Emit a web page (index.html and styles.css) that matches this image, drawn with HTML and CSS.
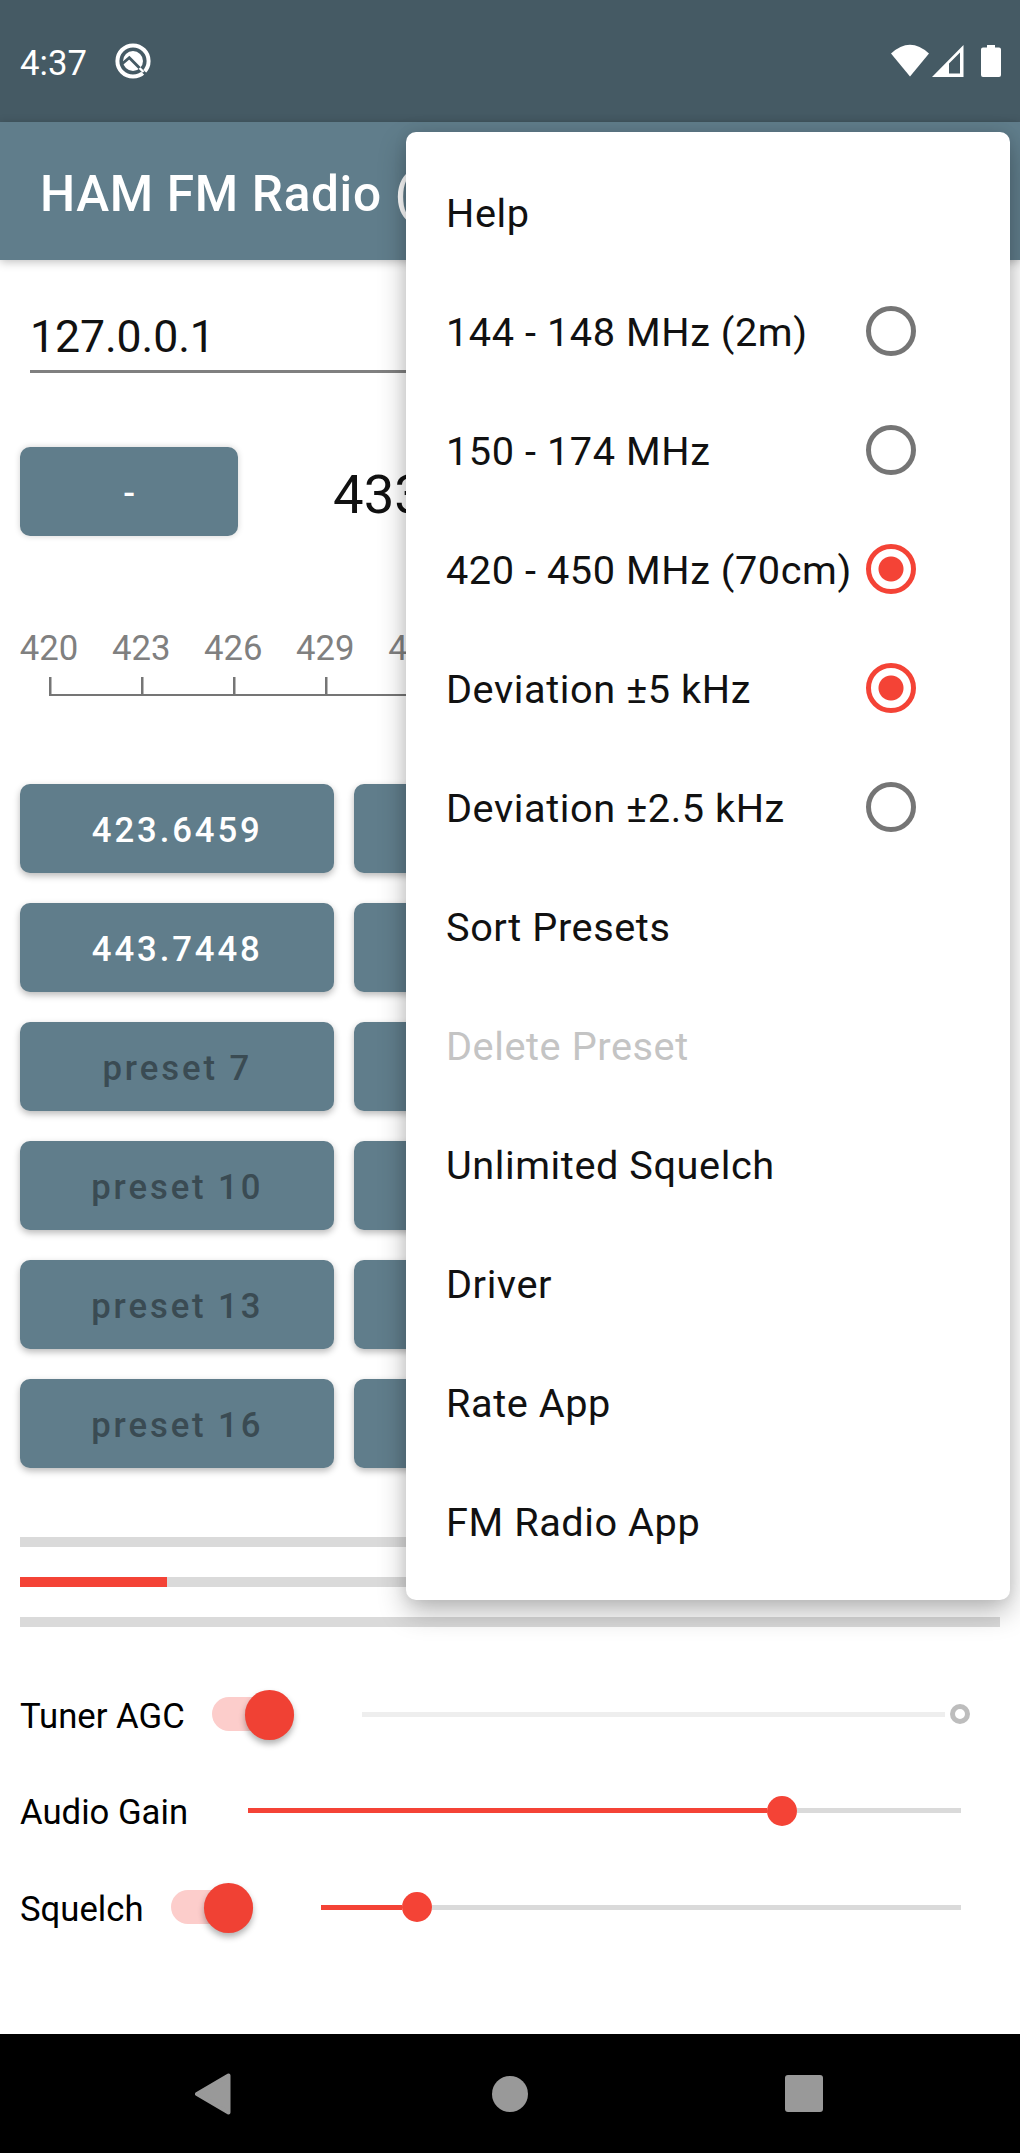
FILE: index.html
```html
<!DOCTYPE html>
<html lang="en">
<head>
<meta charset="utf-8">
<title>HAM FM Radio</title>
<link rel="stylesheet" href="styles.css">
</head>
<body>
<div class="phone">
  <header class="status">
    <span class="clock">4:37</span>
    <svg class="q-icon" width="36" height="36" viewBox="0 0 36 36">
      <circle cx="18" cy="18" r="15.600" fill="none" stroke="#fff" stroke-width="4"/>
      <circle cx="18" cy="18" r="10" fill="#fff"/>
      <path d="M7.500 20.500L14.300 14.700L32 32.500" fill="none" stroke="#455a64" stroke-width="2.800"/>
      <path d="M24.500 25L28.500 29" stroke="#fff" stroke-width="2.400"/>
    </svg>
    <svg class="signals" width="112" height="36" viewBox="0 0 112 36" fill="#fff">
      <path d="M1 10.5Q20 -7 39 10.5L20 33.5Z"/>
      <path fill-rule="evenodd" d="M42 34L73.5 2V34ZM59 20.5V30.5H70V9.5Z"/>
      <path d="M97 2H105V4.500H109Q111 4.500 111 6.500V32Q111 34 109 34H93Q91 34 91 32V6.500Q91 4.500 93 4.500H97Z"/>
    </svg>
  </header>
  <div class="appbar"><h1>HAM FM Radio (</h1></div>
  <main>
    <div class="address">127.0.0.1</div>
    <div class="tuning"><button class="btn step">-</button><span class="freq">433</span></div>
    <div class="scale">
      <span>420</span><span>423</span><span>426</span><span>429</span><span>432</span>
    </div>
    <div class="presets">
      <button class="btn">423.6459</button><button class="btn"></button>
      <button class="btn">443.7448</button><button class="btn"></button>
      <button class="btn off">preset 7</button><button class="btn off"></button>
      <button class="btn off">preset 10</button><button class="btn off"></button>
      <button class="btn off">preset 13</button><button class="btn off"></button>
      <button class="btn off">preset 16</button><button class="btn off"></button>
    </div>
    <div class="meters">
      <div class="meter"></div>
      <div class="meter"><div class="fill" style="width:147px"></div></div>
      <div class="meter"></div>
    </div>
    <div class="controls">
      <div class="control">
        <label>Tuner AGC</label>
        <span class="switch tuner"><i></i></span>
        <span class="slider disabled"><i class="track"></i><i class="ring"></i></span>
      </div>
      <div class="control">
        <label>Audio Gain</label>
        <span class="slider gain"><i class="active" style="width:519px"></i><i class="thumb"></i><i class="track"></i></span>
      </div>
      <div class="control">
        <label>Squelch</label>
        <span class="switch squelch"><i></i></span>
        <span class="slider level"><i class="active" style="width:81px"></i><i class="thumb"></i><i class="track"></i></span>
      </div>
    </div>
  </main>
  <nav class="navbar">
    <svg width="36" height="42" viewBox="0 0 36 42"><path d="M2 21L33.500 2.500V39.500Z" fill="#999" stroke="#999" stroke-width="4" stroke-linejoin="round"/></svg>
    <span class="home"></span>
    <span class="recent"></span>
  </nav>
  <div class="menu">
    <div class="item">Help</div>
    <div class="item">144 - 148 MHz (2m)<span class="radio"></span></div>
    <div class="item">150 - 174 MHz<span class="radio"></span></div>
    <div class="item">420 - 450 MHz (70cm)<span class="radio on"></span></div>
    <div class="item">Deviation ±5 kHz<span class="radio on"></span></div>
    <div class="item">Deviation ±2.5 kHz<span class="radio"></span></div>
    <div class="item">Sort Presets</div>
    <div class="item dim">Delete Preset</div>
    <div class="item">Unlimited Squelch</div>
    <div class="item">Driver</div>
    <div class="item">Rate App</div>
    <div class="item">FM Radio App</div>
  </div>
</div>
</body>
</html>
```
FILE: styles.css
```css
* { box-sizing: border-box; }
body { margin: 0; background: #fff; font-family: Roboto, sans-serif; color: #111; }
.phone { position: relative; width: 1020px; height: 2153px; overflow: hidden; display: flex; flex-direction: column; }

.status { height: 122px; background: #455a64; display: flex; align-items: center; padding: 0 18px 0 20px; color: #fff; }
.clock { font-size: 34.7px; line-height: 40px; padding-top: 3px; width: 95px; }
.q-icon { flex: none; }
.signals { margin-left: auto; }

.appbar { height: 138px; background: #607d8b; color: #fff; padding: 0 40px; display: flex; align-items: center; box-shadow: 0 2px 9px rgba(0,0,0,.25); position: relative; flex: none; }
h1 { margin: 6px 0 0; font-size: 49.6px; font-weight: 500; white-space: nowrap; line-height: 58px; letter-spacing: .65px; }

main { flex: 1; min-height: 0; padding: 0 20px; display: flex; flex-direction: column; }
.address { margin: 40px 10px 0; height: 73px; border-bottom: 3px solid #808080; font-size: 44.6px; line-height: 75px; letter-spacing: -.1px; }
.tuning { margin-top: 74px; display: flex; height: 89px; align-items: center; }
.freq { font-size: 54.500px; margin-left: 95px; padding-top: 5px; }
.btn { border: 0; padding: 2px 0 0 1px; height: 89px; border-radius: 10px; background: #607d8b; color: #fff; font: 500 34.7px Roboto, sans-serif; letter-spacing: 2.9px; box-shadow: 0 3px 7px rgba(0,0,0,.28); }
.btn.off { color: #3a4b53; }
.btn.step { width: 218px; padding: 2px 0 0 3px; box-shadow: 0 0 6px rgba(0,0,0,.18); }

.scale { margin-top: 88px; height: 72px; display: flex; margin-left: -17px; color: #808080; font-size: 34.7px; line-height: 49px; }
.scale span { flex: none; width: 92.1px; text-align: center; height: 72px; background: linear-gradient(#757575, #757575) 46px 53px / 2.500px 17px no-repeat, linear-gradient(#757575, #757575) 0 70px / 100% 2px no-repeat; }
.scale span:first-child { background-position: 46px 53px, 46px 70px; }

.presets { margin-top: 88px; display: grid; grid-template-columns: 313.500px 313.500px; gap: 30px 20px; grid-auto-rows: 89px; }

.meters { margin-top: 69px; display: grid; gap: 30px; }
.meter { height: 10px; background: #dadada; }
.fill { height: 10px; background: #f44336; }

.controls { margin-top: 39px; }
.control { display: flex; align-items: center; height: 96.600px; }
.control label { font-size: 34.7px; line-height: 40px; color: #000; padding-top: 3px; white-space: nowrap; }
.switch { position: absolute; width: 82px; height: 34px; border-radius: 17px; background: #fccdcb; }
.switch i { position: absolute; right: 0; top: -7px; width: 49.500px; height: 49.500px; border-radius: 50%; background: #f04134; box-shadow: 0 4px 6px rgba(0,0,0,.3); }
.switch.tuner { left: 212px; }
.switch.squelch { left: 171px; }
.slider { display: flex; align-items: center; width: 713px; margin-left: auto; margin-right: 39px; height: 30px; }
.slider.level { width: 640px; }
.slider.disabled { width: 608px; margin-right: 30px; }
.active { height: 5px; background: #f44336; }
.track { height: 5px; flex: 1; background: #dadada; }
.disabled .track { background: #eee; margin-right: 5px; }
.thumb { width: 30px; height: 30px; border-radius: 50%; background: #f44336; }
.ring { width: 20px; height: 20px; border: 5px solid #bdbdbd; border-radius: 50%; }

.navbar { height: 119px; flex: none; background: #000; display: flex; align-items: center; justify-content: space-between; padding: 0 197px 0 195px; }
.home { width: 36px; height: 36px; border-radius: 50%; background: #999; margin-left: 3px; }
.recent { width: 38px; height: 37px; border-radius: 3px; background: #999; }

.menu { position: absolute; left: 406px; top: 132px; width: 604px; height: 1468px; padding: 20px 94px 0 40px; border-radius: 10px; background: #fff; box-shadow: 0 12px 28px rgba(0,0,0,.28), 0 0 14px rgba(0,0,0,.08); }
.item { height: 119px; display: flex; align-items: center; justify-content: space-between; font-size: 39.700px; letter-spacing: .57px; white-space: nowrap; padding-top: 3px; }
.item.dim { color: #c4c4c4; }
.radio { width: 50px; height: 50px; margin-top: -3px; border: 5px solid #757575; border-radius: 50%; flex: none; }
.radio.on { border-color: #f44336; background: radial-gradient(circle, #f44336 12px, #fff 13px); }
```
